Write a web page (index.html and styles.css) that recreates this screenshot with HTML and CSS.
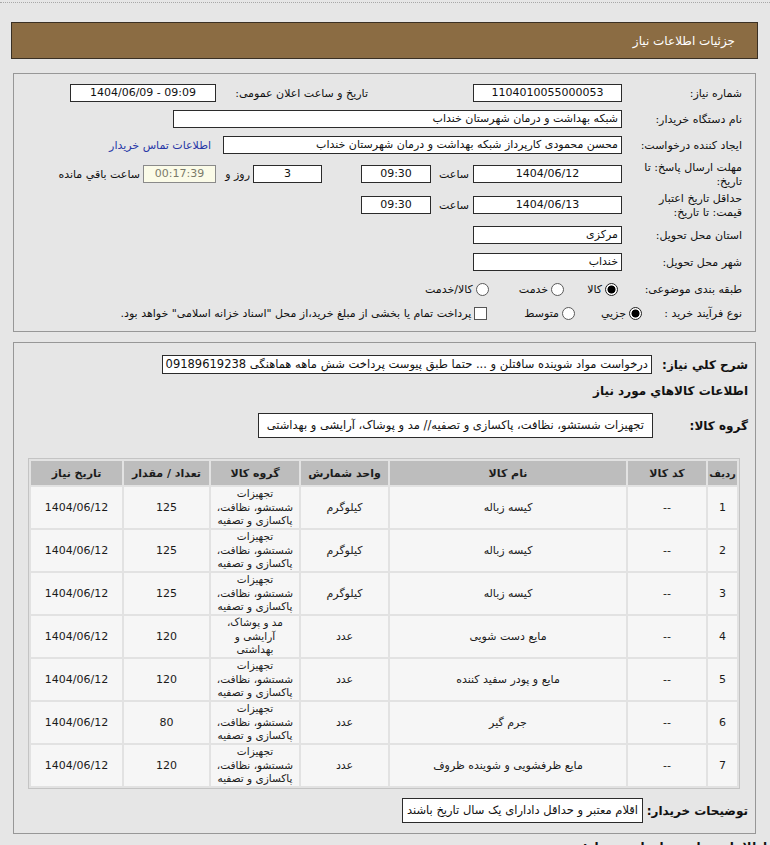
FILE: index.html
```html
<!DOCTYPE html>
<html lang="fa" dir="rtl">
<head>
<meta charset="utf-8">
<title>جزئیات اطلاعات نیاز</title>
<link rel="stylesheet" href="styles.css">
</head>
<body>
<div class="dots"></div>
<div class="titlebar">جزئیات اطلاعات نیاز</div>

<div class="panel info">
  <div class="row h26">
    <div class="lbl">شماره نیاز:</div>
    <div class="box c w149">1104010055000053</div>
    <div class="lbl2">تاریخ و ساعت اعلان عمومی:</div>
    <div class="box c w146 ltr">1404/06/09 - 09:09</div>
  </div>
  <div class="row h26">
    <div class="lbl">نام دستگاه خریدار:</div>
    <div class="box w449">شبکه بهداشت و درمان شهرستان خنداب</div>
  </div>
  <div class="row h26">
    <div class="lbl">ایجاد کننده درخواست:</div>
    <div class="box w399">محسن محمودی کارپرداز شبکه بهداشت و درمان شهرستان خنداب</div>
    <a class="contact" href="#">اطلاعات تماس خریدار</a>
  </div>
  <div class="row h32">
    <div class="lbl two">مهلت ارسال پاسخ: تا<br>تاریخ:</div>
    <div class="box c w149">1404/06/12</div>
    <div class="tlbl">ساعت</div>
    <div class="box c w70">09:30</div>
    <div class="box c w69 days">3</div>
    <div class="dlbl">روز و</div>
    <div class="box c w73 remain">00:17:39</div>
    <div class="rlbl">ساعت باقي مانده</div>
  </div>
  <div class="row h30">
    <div class="lbl two">حداقل تاریخ اعتبار<br>قیمت: تا تاریخ:</div>
    <div class="box c w149">1404/06/13</div>
    <div class="tlbl">ساعت</div>
    <div class="box c w70">09:30</div>
  </div>
  <div class="row h30">
    <div class="lbl">استان محل تحویل:</div>
    <div class="box w149">مرکزی</div>
  </div>
  <div class="row h24">
    <div class="lbl">شهر محل تحویل:</div>
    <div class="box w149">خنداب</div>
  </div>
  <div class="row h30">
    <div class="lbl">طبقه بندی موضوعی:</div>
    <span class="radio on first"></span><span class="otext">کالا</span>
    <span class="radio gap23"></span><span class="otext">خدمت</span>
    <span class="radio gap30"></span><span class="otext">کالا/خدمت</span>
  </div>
  <div class="row h18">
    <div class="lbl w100">نوع فرآیند خرید :</div>
    <span class="radio on"></span><span class="otext">جزیي</span>
    <span class="radio gap28"></span><span class="otext">متوسط</span>
    <span class="check"></span><span class="otext">پرداخت تمام یا بخشی از مبلغ خرید،از محل "اسناد خزانه اسلامی" خواهد بود.</span>
  </div>
</div>

<div class="panel goods">
  <div class="grow">
    <div class="blbl w96">شرح کلي نیاز:</div>
    <div class="box desc">درخواست مواد شوینده سافتلن و ... حتما طبق پیوست پرداخت شش ماهه هماهنگی 09189619238</div>
  </div>
  <div class="section">اطلاعات کالاهاي مورد نیاز</div>
  <div class="grow group-row">
    <div class="blbl w95">گروه کالا:</div>
    <div class="box gbox">تجهیزات شستشو، نظافت، پاکسازی و تصفیه// مد و پوشاک، آرایشی و بهداشتی</div>
  </div>

  <table class="items">
    <colgroup>
      <col class="c1"><col class="c2"><col class="c3"><col class="c4"><col class="c5"><col class="c6"><col class="c7">
    </colgroup>
    <thead>
      <tr><th class="rn">ردیف</th><th>کد کالا</th><th>نام کالا</th><th>واحد شمارش</th><th>گروه کالا</th><th>تعداد / مقدار</th><th>تاریخ نیاز</th></tr>
    </thead>
    <tbody>
      <tr><td>1</td><td>--</td><td>کیسه زباله</td><td>کیلوگرم</td><td class="grp">تجهیزات<br>شستشو، نظافت،<br>پاکسازی و تصفیه</td><td>125</td><td>1404/06/12</td></tr>
      <tr><td>2</td><td>--</td><td>کیسه زباله</td><td>کیلوگرم</td><td class="grp">تجهیزات<br>شستشو، نظافت،<br>پاکسازی و تصفیه</td><td>125</td><td>1404/06/12</td></tr>
      <tr><td>3</td><td>--</td><td>کیسه زباله</td><td>کیلوگرم</td><td class="grp">تجهیزات<br>شستشو، نظافت،<br>پاکسازی و تصفیه</td><td>125</td><td>1404/06/12</td></tr>
      <tr><td>4</td><td>--</td><td>مایع دست شویی</td><td>عدد</td><td class="grp">مد و پوشاک،<br>آرایشی و<br>بهداشتی</td><td>120</td><td>1404/06/12</td></tr>
      <tr><td>5</td><td>--</td><td>مایع و پودر سفید کننده</td><td>عدد</td><td class="grp">تجهیزات<br>شستشو، نظافت،<br>پاکسازی و تصفیه</td><td>120</td><td>1404/06/12</td></tr>
      <tr><td>6</td><td>--</td><td>جرم گیر</td><td>عدد</td><td class="grp">تجهیزات<br>شستشو، نظافت،<br>پاکسازی و تصفیه</td><td>80</td><td>1404/06/12</td></tr>
      <tr><td>7</td><td>--</td><td>مایع ظرفشویی و شوینده ظروف</td><td>عدد</td><td class="grp">تجهیزات<br>شستشو، نظافت،<br>پاکسازی و تصفیه</td><td>120</td><td>1404/06/12</td></tr>
    </tbody>
  </table>

  <div class="grow note-row">
    <div class="blbl w105">توضیحات خریدار:</div>
    <div class="box nbox">اقلام معتبر و حداقل دادارای یک سال تاریخ باشند</div>
  </div>
</div>

<div class="footer-title">اطلاعات تماس سازمان خریدار:</div>
</body>
</html>
```

FILE: styles.css
```css
* { box-sizing: border-box; }
html, body { margin: 0; padding: 0; }
body {
  width: 770px;
  height: 845px;
  overflow: hidden;
  background: #e6e6e6;
  direction: rtl;
  font-family: "DejaVu Sans", sans-serif;
  font-size: 11px;
  color: #111;
}

.dots {
  height: 3px;
  border-bottom: 1px dotted #a8a8a8;
}

.titlebar {
  margin: 19px 12px 0 11px;
  height: 37px;
  background: #8b6c43;
  border: 1px solid #3a3024;
  color: #fff;
  font-size: 12px;
  display: flex;
  align-items: center;
  padding-right: 22px;
}

.panel {
  border: 1px solid #979797;
  background: #e6e6e6;
  margin-left: 13px;
  margin-right: 14px;
}

.info {
  margin-top: 14px;
  padding: 6px 13px 9px 6px;
}

.row { display: flex; align-items: center; }
.h26 { height: 26px; }
.h32 { height: 32px; }
.h30 { height: 30px; }
.h24 { height: 24px; }
.h18 { height: 18px; }

.lbl { width: 120px; flex: none; white-space: nowrap; }
.lbl.two { line-height: 14px; padding-top: 2px; }
.lbl.w100 { width: 100px; }

.box {
  flex: none;
  height: 18px;
  line-height: 16px;
  border: 1px solid #2b2b2b;
  background: #fff;
  padding: 0 3px;
  white-space: nowrap;
  overflow: hidden;
}
.c { text-align: center; }
.ltr { direction: ltr; }
.w149 { width: 149px; }
.w146 { width: 146px; }
.w449 { width: 449px; }
.w399 { width: 399px; }
.w70 { width: 70px; }
.w69 { width: 69px; }
.w73 { width: 73px; }

.lbl2 {
  margin-right: 105px;
  width: 152px;
  flex: none;
  white-space: nowrap;
}
.contact {
  margin-right: 12px;
  color: #2637a6;
  text-decoration: none;
  white-space: nowrap;
}
.tlbl { width: 42px; flex: none; padding-right: 4px; }
.days { margin-right: 39px; }
.dlbl { width: 37px; flex: none; padding-right: 3px; white-space: nowrap; }
.remain { background: #fbfbe8; color: #7a7a6a; border-color: #8a8a8a; }
.rlbl { margin-right: 3px; white-space: nowrap; }

.radio {
  flex: none;
  width: 13px;
  height: 13px;
  border-radius: 50%;
  border: 1px solid #5a5a5a;
  background: #fff;
}
.radio.on {
  border-color: #222;
  background: radial-gradient(circle, #000 0 3.6px, #fff 4.4px);
}
.radio.first { margin-right: 4px; }
.gap23 { margin-right: 23px; }
.gap30 { margin-right: 30px; }
.gap28 { margin-right: 26px; }
.otext { margin-right: 3px; white-space: nowrap; }
.check {
  flex: none;
  width: 13px;
  height: 13px;
  border: 1px solid #555;
  background: #fff;
  margin-right: 37px;
}

.goods {
  margin-top: 10px;
  padding: 12px 7px 10px 16px;
}
.grow { display: flex; align-items: center; }
.blbl { font-weight: bold; font-size: 12px; flex: none; white-space: nowrap; }
.w96 { width: 96px; }
.w95 { width: 95px; }
.w105 { width: 105px; }

.desc {
  height: 19px;
  line-height: 17px;
  font-size: 11.5px;
  padding: 0 3px;
}
.section {
  margin-top: 9px;
  line-height: 16px;
  font-weight: bold;
  font-size: 12px;
}
.group-row { margin-top: 14px; }
.gbox {
  height: 25px;
  line-height: 23px;
  padding: 0 8px;
  font-size: 11.5px;
}

.items {
  margin-top: 20px;
  margin-right: 8px;
  width: 711px;
  table-layout: fixed;
  border-collapse: separate;
  border-spacing: 2px;
  border: 1px solid #c4c4c4;
  background: #e2e2e2;
}
.c1 { width: 29px; }
.c2 { width: 78px; }
.c3 { width: 236px; }
.c4 { width: 87px; }
.c5 { width: 88px; }
.c6 { width: 85px; }
.c7 { width: 91px; }

.items th {
  background: #bdbdbd;
  height: 24px;
  font-weight: bold;
  font-size: 11px;
  color: #1c1c1c;
  padding: 0 2px;
  white-space: nowrap;
  text-align: center;
}
.items th.rn { padding: 0; font-size: 10px; }
.items td {
  background: #f6f6f6;
  height: 41px;
  text-align: center;
  padding: 0 2px;
  color: #1a1a1a;
}
.items td.grp { line-height: 13.5px; font-size: 10.5px; }

.note-row { margin-top: 9px; }
.nbox {
  height: 25px;
  line-height: 23px;
  padding: 0 4px;
  font-size: 11.5px;
}

.footer-title {
  margin-top: 6px;
  padding-right: 3px;
  font-weight: bold;
  font-size: 12px;
}
```
